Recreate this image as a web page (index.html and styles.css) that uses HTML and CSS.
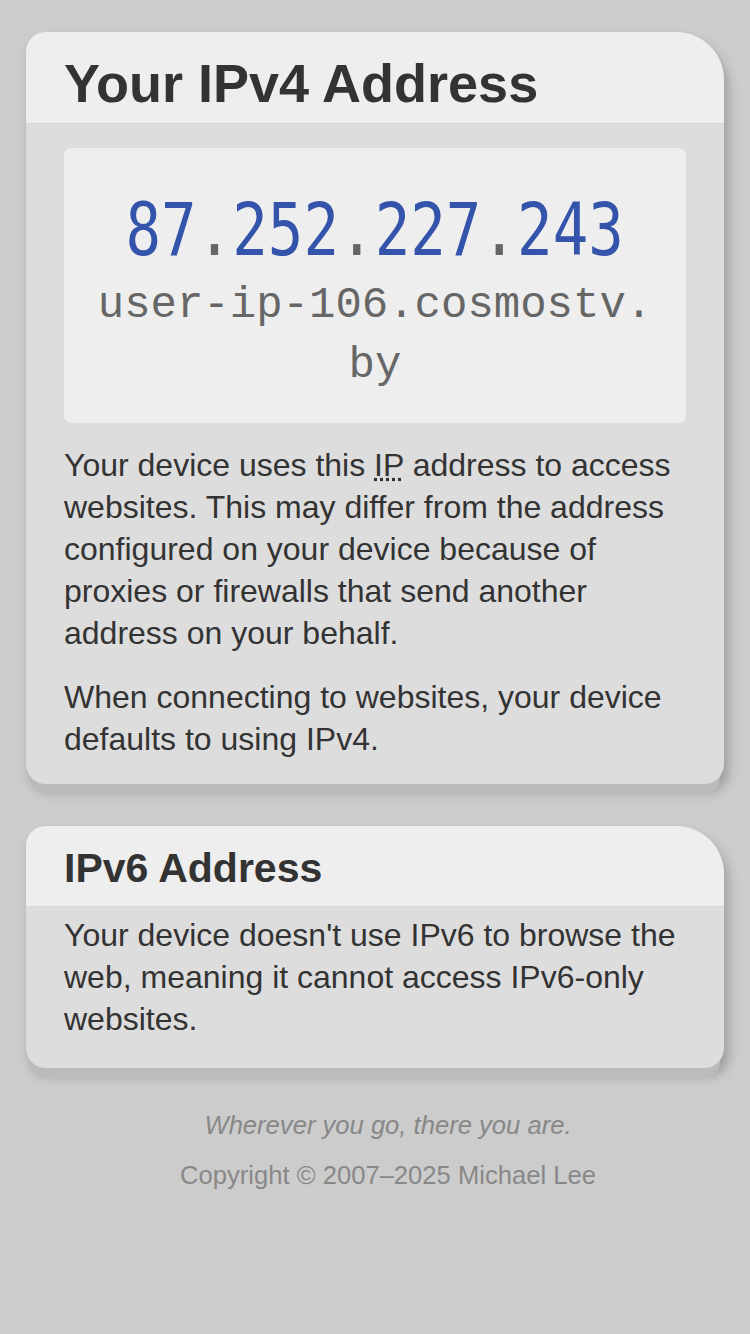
FILE: index.html
```html
<!DOCTYPE html>
<html lang="en">
<head>
<meta charset="utf-8">
<title>Your IP Address</title>
<link rel="stylesheet" href="styles.css">
</head>
<body>
<main class="page">
  <section class="card">
    <header class="card-head head-v4">
      <h1 class="title-lg">Your IPv4 Address</h1>
    </header>
    <div class="card-body body-v4">
      <div class="ip-box">
        <div class="ip-line"><span class="ip-num">87<span class="dot">.</span>252<span class="dot">.</span>227<span class="dot">.</span>243</span></div>
        <div class="host">user-ip-106.cosmostv.<br>by</div>
      </div>
      <p class="text">Your device uses this <abbr title="Internet Protocol">IP</abbr> address to access websites. This may differ from the address configured on your device because of proxies or firewalls that send another address on your behalf.</p>
      <p class="text">When connecting to websites, your device defaults to using IPv4.</p>
    </div>
  </section>
  <section class="card">
    <header class="card-head head-v6">
      <h2 class="title-md">IPv6 Address</h2>
    </header>
    <div class="card-body body-v6">
      <p class="text">Your device doesn't use IPv6 to browse the web, meaning it cannot access IPv6-only websites.</p>
    </div>
  </section>
  <footer class="footer">
    <p class="motto">Wherever you go, there you are.</p>
    <p class="copy">Copyright © 2007–2025 Michael Lee</p>
  </footer>
</main>
</body>
</html>
```
FILE: styles.css
```css
html, body {
  margin: 0;
  padding: 0;
  background: #cccccc;
}
body {
  font-family: "Liberation Sans", Arial, sans-serif;
  color: #333333;
}
.page {
  padding: 32px 26px 0;
  display: flex;
  flex-direction: column;
}
.card {
  background: #dddddd;
  border-radius: 20px 48px 20px 20px;
  box-shadow: 0 14px 0 -4px #bbbbbb, 4px 8px 12px rgba(0, 0, 0, 0.24);
}
.card + .card {
  margin-top: 42px;
}
.card-head {
  background: #eeeeee;
  border-radius: 20px 48px 0 0;
  padding: 0 38px;
  box-shadow: 0 1px 1px rgba(0,0,0,0.03);
}
.head-v4 {
  padding-top: 19px;
  padding-bottom: 7px;
}
.head-v6 {
  padding-top: 18px;
  padding-bottom: 13px;
}
.title-lg {
  margin: 0;
  font-size: 54px;
  line-height: 65px;
  font-weight: bold;
}
.title-md {
  margin: 0;
  font-size: 41px;
  line-height: 49px;
  font-weight: bold;
}
.card-body {
  padding: 0 38px;
}
.body-v4 {
  padding-top: 25px;
  padding-bottom: 24px;
}
.body-v6 {
  padding-top: 8px;
  padding-bottom: 28px;
}
.ip-box {
  background: #eeeeee;
  border-radius: 8px;
  padding: 37px 0 28px;
  text-align: center;
}
.ip-line {
  height: 90px;
  line-height: 90px;
}
.ip-num {
  display: inline-block;
  font-family: "DejaVu Sans Mono", monospace;
  font-size: 73px;
  line-height: 90px;
  color: #3354aa;
  transform: scaleX(0.81);
}
.dot {
  color: #666666;
}
.host {
  font-family: "Liberation Mono", "Courier New", monospace;
  font-size: 44px;
  line-height: 60px;
  color: #666666;
}
.text {
  margin: 21px 0 0;
  font-size: 32px;
  line-height: 42px;
}
.text + .text {
  margin-top: 22px;
}
.body-v6 .text {
  margin-top: 0;
}
abbr {
  text-decoration: underline dotted;
}
.footer {
  margin-top: 41px;
  padding-left: 26px;
  text-align: center;
  color: #888888;
  font-size: 25.6px;
  line-height: 32px;
}
.motto {
  margin: 0;
  font-style: italic;
}
.copy {
  margin: 18px 0 0;
}
```
